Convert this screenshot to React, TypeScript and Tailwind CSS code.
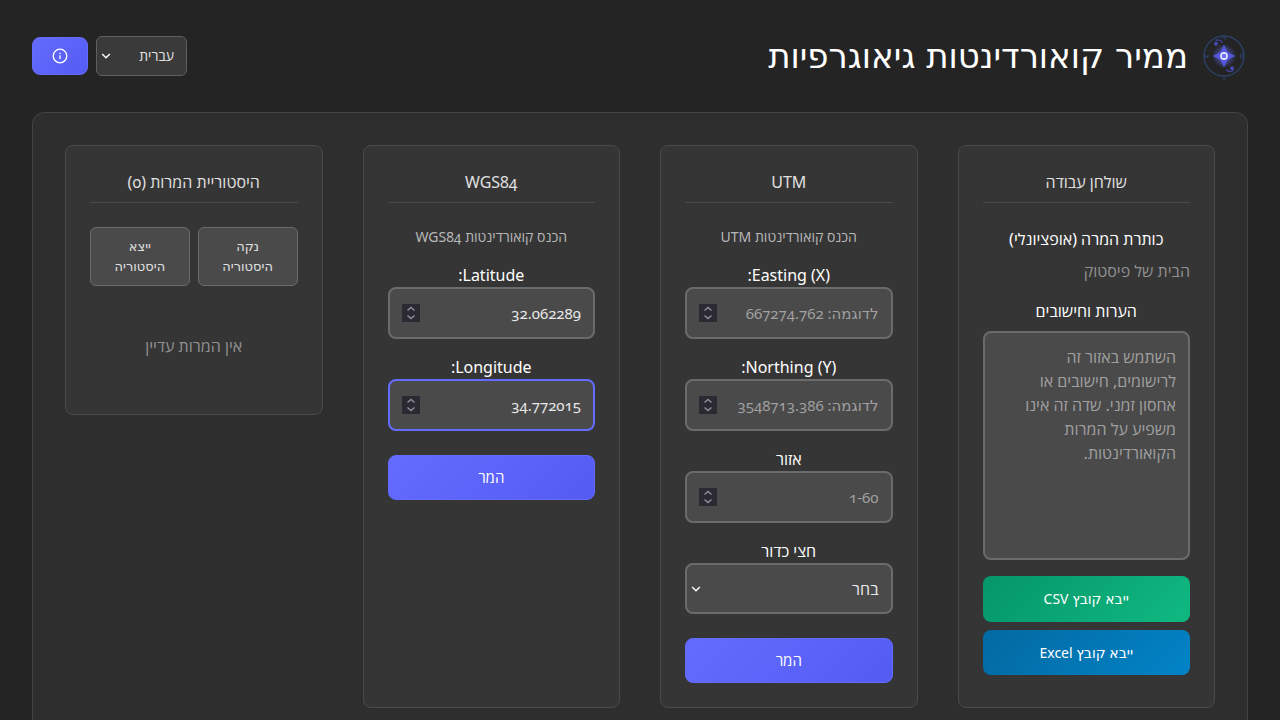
import { useId, type ReactNode } from "react";

const WIDE_HEBREW = "[font-family:'DejaVu_Sans',sans-serif]";
const MIXED = "[font-family:'Noto_Sans','DejaVu_Sans',sans-serif]";

const FIELD =
  "w-full rounded-lg border-2 bg-[#4a4a4a] px-3 leading-6 text-[#e8e8e8] placeholder:text-[#a0a0a0] placeholder:opacity-100 outline-none";

function CompassLogo() {
  return (
    <svg viewBox="0 0 48 48" className="size-12 shrink-0" aria-hidden="true">
      <defs>
        <radialGradient id="halo">
          <stop offset="0" stopColor="#646cff" stopOpacity="0.9" />
          <stop offset="0.5" stopColor="#646cff" stopOpacity="0.4" />
          <stop offset="1" stopColor="#646cff" stopOpacity="0" />
        </radialGradient>
      </defs>
      <circle cx="24" cy="24" r="20" fill="none" stroke="#2a4163" strokeWidth="1.4" />
      <g fill="none" stroke="#2b4770" strokeWidth="0.8">
        <path d="M22.400 7.600V3.600l3.200 4V3.600" />
        <path d="M25.600 44.600c-2.800-1.200-3 .8-1.500 1.200s1.800 1.800-1.700 1.400" />
        <path d="M43.400 22h-3v4h3M40.400 24h2.600" />
        <path d="M4.400 22l.8 4 1.200-3 1.200 3 .8-4" />
      </g>
      <circle cx="24" cy="24" r="12" fill="url(#halo)" />
      <path
        d="M24 13.200l3.700 7.100 7.100 3.700-7.100 3.700-3.700 7.100-3.700-7.100-7.100-3.700 7.100-3.700z"
        fill="#5458dc"
        stroke="#4b50c4"
        strokeWidth="0.8"
        strokeLinejoin="round"
      />
      <circle cx="24" cy="24" r="3.100" fill="#6a70ff" stroke="#e4e5ff" strokeWidth="1.600" />
      <g fill="#4549b4">
        <circle cx="16" cy="11.800" r="2" />
        <circle cx="32" cy="36.200" r="2" />
      </g>
      <g fill="none" stroke="#4044a0" strokeWidth="1.300" strokeLinecap="round">
        <path d="M16 8.400c1.800-1 5-.6 6 2" />
        <path d="M33.600 37.400c-.8 2.600-5.200 3-7 .4" />
      </g>
    </svg>
  );
}

function Chevron({ className }: { className: string }) {
  return (
    <svg viewBox="0 0 10 6" className={`pointer-events-none absolute h-1.5 w-2.5 ${className}`} aria-hidden="true">
      <path d="M1.200 1L5 4.800 8.800 1" fill="none" stroke="#fff" strokeWidth="1.400" />
    </svg>
  );
}

function Card({ title, children, className = "" }: { title: string; children: ReactNode; className?: string }) {
  return (
    <section className={`rounded-lg border border-[#4a4a4a] bg-[#353535] p-6 ${className}`}>
      <h2 className="mb-6 border-b border-[#4a4a4a] pb-2 text-center text-base leading-6 text-[#e0e0e0]">{title}</h2>
      {children}
    </section>
  );
}

function NumberField({
  label,
  placeholder,
  value,
  active = false,
}: {
  label: string;
  placeholder?: string;
  value?: string;
  active?: boolean;
}) {
  const id = useId();
  return (
    <div className="mb-4">
      <label htmlFor={id} className="block text-center text-base leading-6">
        {label}
      </label>
      <div className="relative">
        <input
          id={id}
          type="number"
          step="any"
          placeholder={placeholder}
          defaultValue={value}
          className={`${FIELD} ${MIXED} h-[52px] text-[15px] [appearance:textfield] ${active ? "border-[#646cff]" : "border-[#6b6b6b] focus:border-[#646cff]"}`}
        />
        <svg
          viewBox="0 0 18 18"
          className="pointer-events-none absolute left-3.5 top-1/2 size-[18px] -translate-y-1/2 bg-[#2b2a33]"
          aria-hidden="true"
        >
          <path d="M5.500 6.500L9 3.500l3.500 3M5.500 11.500l3.500 3 3.500-3" fill="none" stroke="#8f8f9d" strokeWidth="1.400" />
        </svg>
      </div>
    </div>
  );
}

function ConvertButton() {
  return (
    <button
      type="button"
      className="mt-2 h-[45px] w-full rounded-lg border border-[#646cff] bg-linear-135 from-[#646cff] to-[#535bf2] text-[15px] text-white"
    >
      המר
    </button>
  );
}

export default function App() {
  return (
    <div
      dir="rtl"
      lang="he"
      className="min-h-screen bg-[#242424] p-8 text-white oldstyle-nums [font-family:'Noto_Sans','Open_Sans',sans-serif]"
    >
      <header className="mb-8 flex items-center justify-between">
        <div className="flex items-center gap-3">
          <CompassLogo />
          <h1 className={`text-[34px] leading-[48px] ${WIDE_HEBREW}`}>ממיר קואורדינטות גיאוגרפיות</h1>
        </div>
        <div className="flex items-center gap-2">
          <div className="relative">
            <select
              aria-label="שפה"
              className="h-10 w-[91px] appearance-none rounded-md border border-[#606060] bg-[#3a3a3a] ps-3 text-sm text-[#e0e0e0]"
            >
              <option>עברית</option>
              <option>English</option>
            </select>
            <Chevron className="left-[5px] top-[17px]" />
          </div>
          <button
            type="button"
            aria-label="מידע"
            className="flex h-[38px] w-14 items-center justify-center rounded-lg border border-[#646cff] bg-linear-135 from-[#646cff] to-[#535bf2]"
          >
            <svg viewBox="0 0 16 16" className="size-4" fill="none" stroke="#fff" strokeWidth="1.300" aria-hidden="true">
              <circle cx="8" cy="8" r="6.800" />
              <path d="M8 7.300v3.700M8 4.800v1.300" />
            </svg>
          </button>
        </div>
      </header>

      <main className="grid grid-cols-4 gap-10 rounded-xl border border-[#444444] bg-[#2e2e2e] p-8">
        <Card title="שולחן עבודה">
          <div className="flex flex-col text-base leading-6">
            <label htmlFor="conversion-title" className="mb-2 block text-center">
              כותרת המרה (אופציונלי)
            </label>
            <input
              id="conversion-title"
              placeholder="הבית של פיסטוק"
              className="mb-4 h-6 w-full bg-transparent text-[#e8e8e8] outline-none placeholder:text-[#909090] placeholder:opacity-100"
            />
            <label htmlFor="notes" className="mb-2 block text-center">
              הערות וחישובים
            </label>
            <textarea
              id="notes"
              placeholder="השתמש באזור זה לרישומים, חישובים או אחסון זמני. שדה זה אינו משפיע על המרות הקואורדינטות."
              className={`${FIELD} mb-4 block h-[229px] resize-none border-[#6b6b6b] py-3 pe-5`}
            />
            <div className={`flex flex-col gap-2 text-sm ${MIXED}`}>
              <button type="button" className="h-[46px] rounded-lg bg-linear-135 from-[#059669] to-[#10b981]">
                ייבא קובץ CSV
              </button>
              <button type="button" className="h-[45px] rounded-lg bg-linear-135 from-[#0369a1] to-[#0284c7]">
                ייבא קובץ Excel
              </button>
            </div>
          </div>
        </Card>

        <Card title="UTM">
          <p className="mb-4 text-center text-sm leading-5 text-[#b8b8b8]">הכנס קואורדינטות UTM</p>
          <NumberField label="Easting (X):" placeholder="לדוגמה: 667274.762" />
          <NumberField label="Northing (Y):" placeholder="לדוגמה: 3548713.386" />
          <NumberField label="אזור" placeholder="1-60" />
          <div className="mb-4">
            <label htmlFor="hemisphere" className="block text-center text-base leading-6">
              חצי כדור
            </label>
            <div className="relative">
              <select id="hemisphere" className={`${FIELD} block h-[51px] appearance-none border-[#6b6b6b] text-base`}>
                <option>בחר</option>
                <option>צפון</option>
                <option>דרום</option>
              </select>
              <Chevron className="left-1.5 top-[23px]" />
            </div>
          </div>
          <ConvertButton />
        </Card>

        <Card title="WGS84">
          <p className="mb-4 text-center text-sm leading-5 text-[#b8b8b8]">הכנס קואורדינטות WGS84</p>
          <NumberField label="Latitude:" value="32.062289" />
          <NumberField label="Longitude:" value="34.772015" active />
          <ConvertButton />
        </Card>

        <Card title="היסטוריית המרות (0)" className="self-start">
          <div className={`grid grid-cols-2 gap-2 text-[13px] leading-5 text-[#e0e0e0] ${WIDE_HEBREW}`}>
            <button type="button" className="h-[59px] rounded-md border border-[#6b6b6b] bg-[#4a4a4a] px-4">
              נקה היסטוריה
            </button>
            <button type="button" className="h-[59px] rounded-md border border-[#6b6b6b] bg-[#4a4a4a] px-4">
              ייצא היסטוריה
            </button>
          </div>
          <p className="mt-4 py-8 text-center text-base leading-6 text-[#909090]">אין המרות עדיין</p>
        </Card>
      </main>
    </div>
  );
}
